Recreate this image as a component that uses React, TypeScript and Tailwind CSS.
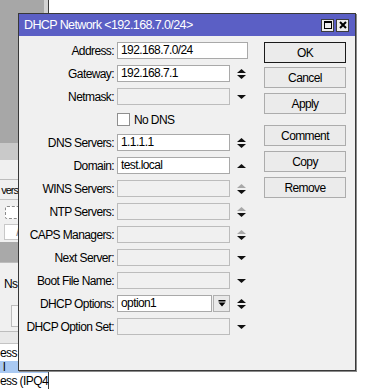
import type { ReactNode } from 'react';

const font = "font-['Liberation_Sans',Arial,sans-serif] text-[12px] tracking-[-0.6px] text-black";

const Spin = ({ up, down }: { up?: string; down?: string }) => (
  <svg width="9" height="10" viewBox="0 0 9 10" className="ml-[7px] shrink-0">
    {up && down && (
      <>
        <polygon points="0,4 4.5,0 9,4" fill={up} />
        <polygon points="0,6 9,6 4.5,10" fill={down} />
      </>
    )}
    {up && !down && <polygon points="0,7 4.5,3 9,7" fill={up} />}
    {down && !up && <polygon points="0,3 9,3 4.5,7" fill={down} />}
  </svg>
);

const Field = ({ value, className = 'w-[113px]', disabled }: { value?: string; className?: string; disabled?: boolean }) => (
  <div
    className={`h-[17px] border px-[3px] leading-[15px] whitespace-nowrap overflow-hidden ${className} ${
      disabled ? 'bg-[#f0f0f0] border-[#bcbcbc]' : 'bg-white border-[#a9a9a9]'
    }`}
  >
    {value}
  </div>
);

const Row = ({ label, children }: { label: string; children?: ReactNode }) => (
  <div className="flex h-[23px] items-center">
    <div className="w-[95px] shrink-0 text-right whitespace-nowrap">{label}</div>
    <div className="ml-[3px] flex items-center">{children}</div>
  </div>
);

const Btn = ({ label, className = '', primary }: { label: string; className?: string; primary?: boolean }) => (
  <div
    className={`flex h-[21px] w-[82px] items-center justify-center bg-[#ebebeb] ${
      primary ? 'border border-[#1a1a1a]' : 'border border-[#acacac]'
    } ${className}`}
  >
    {label}
  </div>
);

const BLACK = '#111';
const GRAY = '#a8a8a8';

export default function App() {
  return (
    <div className={`relative h-[389px] w-[369px] overflow-hidden bg-white ${font}`}>
      {/* window behind the dialog */}
      <div className="flex h-full w-[49px] flex-col border-r border-[#3c3c3c]">
        <div className="h-[143px] shrink-0 border-r-4 border-[#d2d2d2] bg-[#a7a7a7]" />
        <div className="h-[17px] shrink-0 bg-[#c9c9c9]" />
        <div className="h-[20px] shrink-0 border-b border-[#bdbdbd] bg-[#f0f0f0]" />
        <div className="flex h-[22px] shrink-0 items-center bg-[#f0f0f0]">
          <div className="flex w-[18px] justify-end border-b border-[#c4c4c4] whitespace-nowrap text-[11px] tracking-[-1px]">vers</div>
        </div>
        <div className="flex h-[20px] shrink-0 items-center bg-[#f0f0f0] pl-[5px]">
          <div className="h-[13px] w-[16px] rounded-[2px] border border-dashed border-[#8c8c8c] bg-white" />
        </div>
        <div className="flex h-[20px] shrink-0 items-center bg-[#f0f0f0] pl-[4px]">
          <div className="flex h-[16px] w-[20px] items-center justify-end border border-[#c8c8c8] bg-white pr-[4px] text-[#777]">/</div>
        </div>
        <div className="h-[20px] shrink-0 bg-[#a9a9a9]" />
        <div className="flex h-[38px] shrink-0 items-center border-t border-[#bdbdbd] bg-[#f0f0f0] pl-[4px] pt-[4px]">
          <span className="whitespace-nowrap">Ns</span>
        </div>
        <div className="flex h-[32px] shrink-0 items-center border-b border-[#bdbdbd] bg-[#f0f0f0] pl-[11px]">
          <div className="h-[22px] w-[12px] border border-[#bdbdbd] bg-[#f7f7f7]" />
        </div>
        <div className="h-[12px] shrink-0 border-b border-[#c4c4c4] bg-[#e9e9e9]" />
        <div className="flex h-[17px] shrink-0 items-center bg-white">
          <span className="whitespace-nowrap">ess</span>
        </div>
        <div className="flex h-[12px] shrink-0 items-center bg-[#a9c9f2] pl-[3px]">l</div>
        <div className="flex h-[15px] shrink-0 items-center whitespace-nowrap bg-white">
          <span>ess (IPQ4</span>
        </div>
      </div>

      {/* DHCP Network dialog */}
      <div className="absolute left-[18px] top-[13px] flex h-[358px] w-[338px] flex-col border border-[#383838] bg-[#f0f0f0] shadow-[1px_1px_0_#8a8a8a]">
        <div className="flex h-[22px] shrink-0 items-center bg-[#5b5fc5] pl-[5px] pr-[6px]">
          <span className="text-[12.5px] text-white">DHCP Network &lt;192.168.7.0/24&gt;</span>
          <div className="ml-auto flex gap-[2px]">
            <div className="flex h-[13px] w-[13px] items-center justify-center border border-[#3d3d3d] bg-[#ededed]">
              <div className="h-[8px] w-[8px] border border-t-2 border-black" />
            </div>
            <div className="flex h-[13px] w-[13px] items-center justify-center border border-[#3d3d3d] bg-[#ededed]">
              <svg width="8" height="8" viewBox="0 0 8 8">
                <path d="M1 1 L7 7 M7 1 L1 7" stroke="black" strokeWidth="2" />
              </svg>
            </div>
          </div>
        </div>

        <div className="flex pt-[3px]">
          <div className="flex w-[229px] flex-col">
            <Row label="Address:">
              <Field value="192.168.7.0/24" className="w-[131px]" />
            </Row>
            <Row label="Gateway:">
              <Field value="192.168.7.1" />
              <Spin up={BLACK} down={BLACK} />
            </Row>
            <Row label="Netmask:">
              <Field disabled />
              <Spin down={BLACK} />
            </Row>
            <Row label="">
              <div className="h-[13px] w-[13px] border border-[#8f8f8f] bg-white" />
              <span className="ml-[4px]">No DNS</span>
            </Row>
            <Row label="DNS Servers:">
              <Field value="1.1.1.1" />
              <Spin up={BLACK} down={BLACK} />
            </Row>
            <Row label="Domain:">
              <Field value="test.local" />
              <Spin up={BLACK} />
            </Row>
            <Row label="WINS Servers:">
              <Field disabled />
              <Spin up={GRAY} down={BLACK} />
            </Row>
            <Row label="NTP Servers:">
              <Field disabled />
              <Spin up={GRAY} down={BLACK} />
            </Row>
            <Row label="CAPS Managers:">
              <Field disabled />
              <Spin up={GRAY} down={BLACK} />
            </Row>
            <Row label="Next Server:">
              <Field disabled />
              <Spin down={BLACK} />
            </Row>
            <Row label="Boot File Name:">
              <Field disabled />
              <Spin down={BLACK} />
            </Row>
            <Row label="DHCP Options:">
              <Field value="option1" className="w-[95px]" />
              <div className="ml-[1px] flex h-[17px] w-[17px] items-center justify-center border border-[#b0b0b0] bg-[#e9e9e9]">
                <svg width="8" height="7" viewBox="0 0 8 7">
                  <rect x="0.5" y="0" width="7" height="1.5" fill="black" />
                  <polygon points="0.5,2.5 7.5,2.5 4,6.5" fill="black" />
                </svg>
              </div>
              <Spin up={BLACK} down={BLACK} />
            </Row>
            <Row label="DHCP Option Set:">
              <Field disabled />
              <Spin down={BLACK} />
            </Row>
          </div>

          <div className="ml-[16px] flex flex-col pt-[3px]">
            <Btn label="OK" primary />
            <Btn label="Cancel" className="mt-[4px]" />
            <Btn label="Apply" className="mt-[5px]" />
            <Btn label="Comment" className="mt-[11px]" />
            <Btn label="Copy" className="mt-[5px]" />
            <Btn label="Remove" className="mt-[5px]" />
          </div>
        </div>
      </div>
    </div>
  );
}
